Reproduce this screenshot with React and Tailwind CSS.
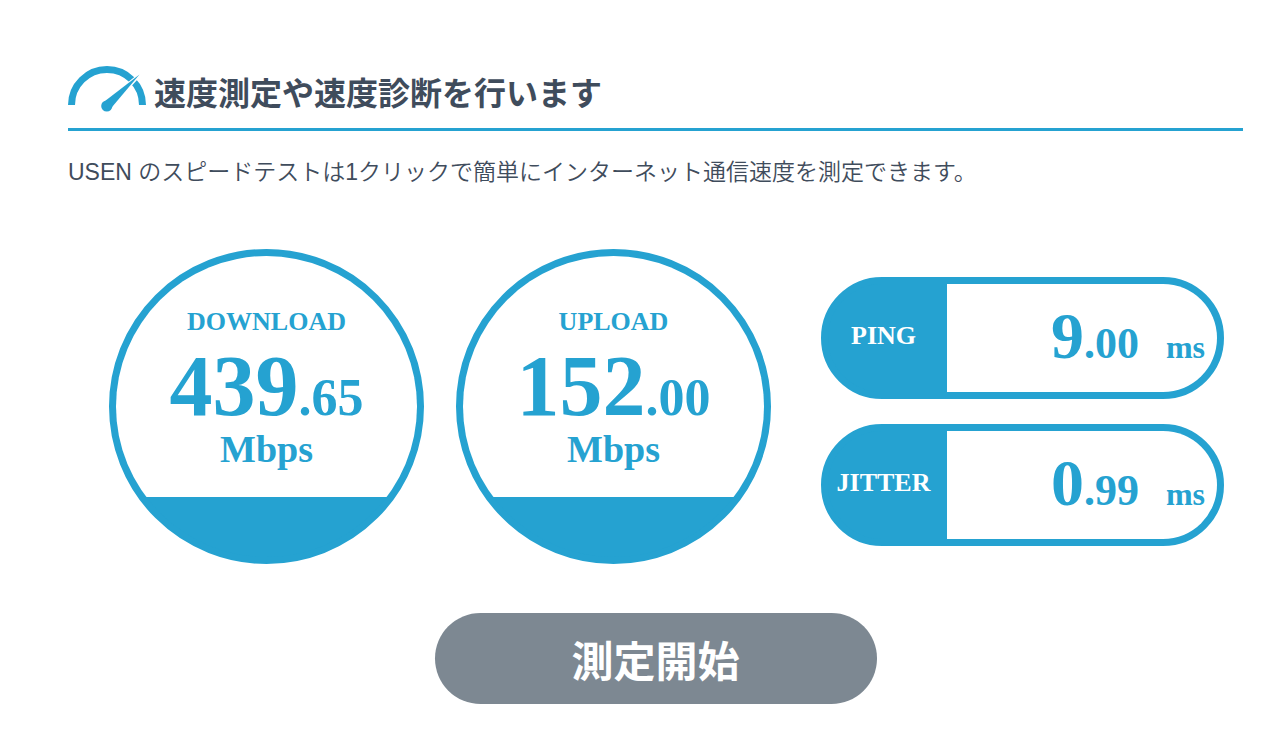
import React from 'react';

const speeds = [
  { label: 'DOWNLOAD', value: '439.65', unit: 'Mbps' },
  { label: 'UPLOAD', value: '152.00', unit: 'Mbps' },
];

const latencies = [
  { label: 'PING', value: '9.00', unit: 'ms' },
  { label: 'JITTER', value: '0.99', unit: 'ms' },
];

const GaugeIcon = () => (
  <svg className="w-[78px] h-[46px] shrink-0" viewBox="0 0 78 46" fill="none" aria-hidden="true">
    <path d="M3.5 39a35.5 35.5 0 0 1 71 0" stroke="#25a2d1" strokeWidth="7" />
    <path d="M72 8.5L37 36.5L42 41.5Z" fill="#fff" stroke="#fff" strokeWidth="3" />
    <path d="M71.5 8.5L36.4 35.6L43.2 42Z" fill="#25a2d1" />
    <circle cx="38.8" cy="40" r="5.6" fill="#25a2d1" />
  </svg>
);

const SpeedCircle = ({ label, value, unit }) => {
  const [whole, decimal] = value.split('.');
  return (
    <div className="w-[315px] h-[315px] shrink-0 rounded-full border-7 border-[#25a2d1] bg-[#25a2d1] overflow-hidden">
      <div className="h-[241px] pt-12 flex flex-col items-center bg-white font-bold">
        <div className="text-[26px] leading-9">{label}</div>
        <div className="pt-1.5 text-[86px] leading-[80px]">
          {whole}
          <span className="text-[52px] leading-none">.{decimal}</span>
        </div>
        <div className="text-[38px] leading-[46px]">{unit}</div>
      </div>
    </div>
  );
};

const LatencyPill = ({ label, value, unit }) => {
  const [whole, decimal] = value.split('.');
  return (
    <div className="h-[122px] flex rounded-full border-7 border-[#25a2d1] bg-[#25a2d1] font-bold">
      <div className="w-[119px] shrink-0 flex items-center justify-center pb-1.5 pr-2 text-[26px] text-white">{label}</div>
      <div className="flex-1 flex items-baseline justify-end gap-[27px] pt-3 pr-3 rounded-r-full bg-white">
        <div className="text-[66px] leading-[80px]">
          {whole}
          <span className="text-[44px] leading-none">.{decimal}</span>
        </div>
        <div className="text-[32px]">{unit}</div>
      </div>
    </div>
  );
};

const App = () => {
  return (
    <main className="min-h-screen bg-white pt-[66px] pb-10 pl-[68px] pr-[37px] font-['Liberation_Sans','Noto_Sans_CJK_JP',sans-serif] text-[#3f4c5c]">
      <header className="flex items-start gap-2 h-[65px] border-b-3 border-[#25a2d1]">
        <GaugeIcon />
        <h1 className="pt-1 text-[32px] leading-[48px] font-bold">速度測定や速度診断を行います</h1>
      </header>

      <p className="mt-6 text-[23px] leading-[34px] font-[350]">
        USEN のスピードテストは1クリックで簡単にインターネット通信速度を測定できます。
      </p>

      <section className="mt-[60px] pl-[41px] pr-[19px] flex items-start font-['Liberation_Serif',serif] text-[#25a2d1]">
        <div className="flex gap-8">
          {speeds.map((s) => (
            <SpeedCircle key={s.label} {...s} />
          ))}
        </div>
        <div className="flex-1 ml-[50px] mt-7 flex flex-col gap-[25px]">
          {latencies.map((l) => (
            <LatencyPill key={l.label} {...l} />
          ))}
        </div>
      </section>

      <div className="mt-[49px] flex justify-center">
        <button type="button" className="w-[442px] h-[91px] rounded-full bg-[#7d8892] pt-2 text-[42px] font-bold text-white cursor-pointer">
          測定開始
        </button>
      </div>
    </main>
  );
};

export default App;
